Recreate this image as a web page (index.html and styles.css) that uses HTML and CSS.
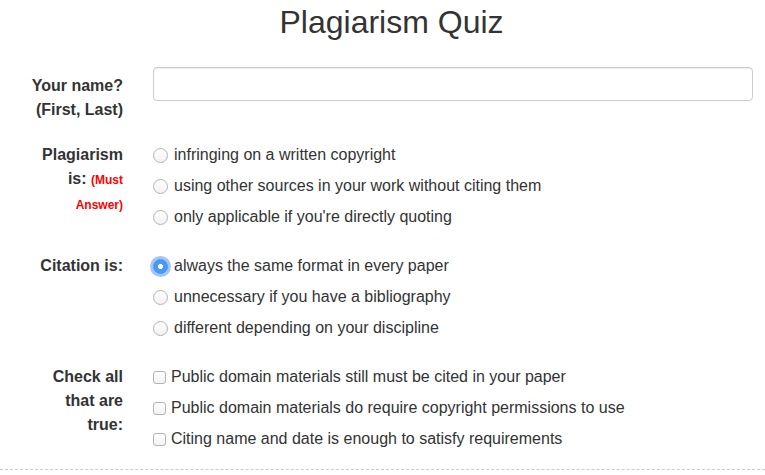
FILE: index.html
```html
<!DOCTYPE html>
<html>
<head>
<meta charset="utf-8">
<link rel="stylesheet" href="styles.css">
</head>
<body>
<h1 class="title">Plagiarism Quiz</h1>
<form class="quiz">
  <div class="group group-name">
    <label class="q-label">Your name? (First, Last)</label>
    <div class="q-body"><input class="text-input" type="text"></div>
  </div>
  <div class="group">
    <label class="q-label">Plagiarism is: <span class="must">(Must Answer)</span></label>
    <div class="q-body options">
      <label class="opt"><input class="radio" type="radio" name="p">infringing on a written copyright</label>
      <label class="opt"><input class="radio" type="radio" name="p">using other sources in your work without citing them</label>
      <label class="opt"><input class="radio" type="radio" name="p">only applicable if you're directly quoting</label>
    </div>
  </div>
  <div class="group">
    <label class="q-label">Citation is:</label>
    <div class="q-body options">
      <label class="opt"><input class="radio focused" type="radio" name="c" checked>always the same format in every paper</label>
      <label class="opt"><input class="radio" type="radio" name="c">unnecessary if you have a bibliography</label>
      <label class="opt"><input class="radio" type="radio" name="c">different depending on your discipline</label>
    </div>
  </div>
  <div class="group">
    <label class="q-label">Check all that are true:</label>
    <div class="q-body options">
      <label class="opt opt-check"><input class="check" type="checkbox">Public domain materials still must be cited in your paper</label>
      <label class="opt opt-check"><input class="check" type="checkbox">Public domain materials do require copyright permissions to use</label>
      <label class="opt opt-check"><input class="check" type="checkbox">Citing name and date is enough to satisfy requirements</label>
    </div>
  </div>
  <hr class="divider">
</form>
</body>
</html>
```
FILE: styles.css
```css
html, body {
  margin: 0;
  padding: 0;
  background: #fff;
}
body {
  font-family: "Liberation Sans", Arial, sans-serif;
  font-size: 16px;
  color: #333;
}
.title {
  margin: 2px 0 25px;
  font-size: 32px;
  line-height: 40px;
  font-weight: normal;
  text-align: center;
  color: #333;
  padding-left: 18px;
}
.quiz {
  margin: 0;
}
.group {
  display: grid;
  grid-template-columns: 138px 1fr;
  margin-bottom: 18px;
}
.group-name {
  margin-bottom: 14px;
}
.q-label {
  box-sizing: border-box;
  width: 138px;
  padding: 7px 15px 0 28px;
  text-align: right;
  font-weight: bold;
  font-size: 16px;
  line-height: 24px;
}
.must {
  color: #f00;
  font-size: 12px;
}
.q-body {
  padding: 0 12px 0 15px;
}
.text-input {
  display: block;
  box-sizing: border-box;
  width: 100%;
  height: 34px;
  margin: 0;
  border: 1px solid #ccc;
  border-radius: 4px;
  box-shadow: inset 0 1px 1px rgba(0,0,0,.075);
  background: #fff;
  outline: none;
}
.options {
  padding-top: 7px;
  display: flex;
  flex-direction: column;
  gap: 7px;
}
.opt {
  display: flex;
  align-items: center;
  height: 24px;
  line-height: 24px;
  white-space: nowrap;
}
.radio {
  appearance: none;
  -webkit-appearance: none;
  box-sizing: border-box;
  width: 15px;
  height: 15px;
  margin: 0 6px 0 0;
  border: 1px solid #b3b3b3;
  border-radius: 50%;
  background: linear-gradient(#fff, #f2f2f2);
  flex: none;
}
.radio:checked {
  border-color: #3b86e8;
  background: radial-gradient(circle, #fff 0 2.2px, #4a9af5 2.8px);
  box-shadow: 0 0 0 3px rgba(80, 150, 245, .55);
}
.check {
  appearance: none;
  -webkit-appearance: none;
  box-sizing: border-box;
  width: 13px;
  height: 13px;
  margin: 0 5px 0 0;
  border: 1px solid #b3b3b3;
  border-radius: 3px;
  background: linear-gradient(#fff, #f2f2f2);
  flex: none;
}
.divider {
  margin: 16px 0 0;
  border: 0;
  border-top: 1px dashed #ccc;
}
```
